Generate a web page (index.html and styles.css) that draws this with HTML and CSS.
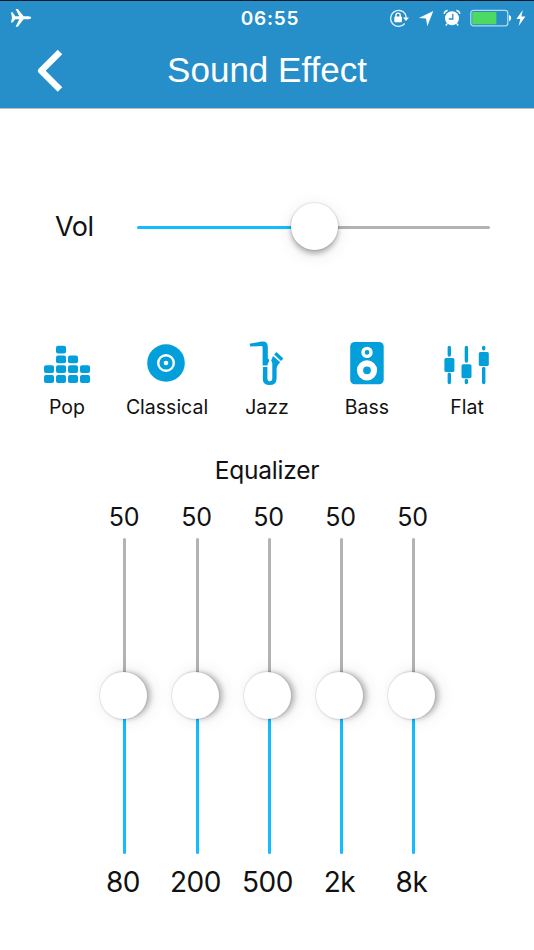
FILE: index.html
```html
<!DOCTYPE html>
<html lang="en">
<head>
  <meta charset="UTF-8" />
  <meta name="viewport" content="width=device-width, initial-scale=1" />
  <title>Sound Effect</title>
  <link rel="stylesheet" href="styles.css">
</head>
<body>

  <header>
    <div class="status">
      <svg class="plane" width="22" height="20" viewBox="0 0 22 20">
        <path d="M1 4.2H2.5L5.3 8.3H9.3L5.6 1H7.8L13.6 8.3H18.6Q21.3 8.7 21.3 9.8Q21.3 10.9 18.6 11.3H13.6L7.8 18.8H5.6L9.3 11.3H5.3L2.5 14.5H1L2 9.8Z" fill="#fff"/>
      </svg>
      <div class="time">06:55</div>
      <div class="indicators">
        <svg width="20" height="18" viewBox="0 0 20 18">
          <path d="M16.3 5A8 8 0 1 0 15.7 14.5" fill="none" stroke="#fff" stroke-opacity=".85" stroke-width="1.4"/>
          <path d="M16.2 5Q17.2 7 17 9" fill="none" stroke="#fff" stroke-width="1.2"/>
          <path d="M14 8.4H20L17 12Z" fill="#fff"/>
          <rect x="5.3" y="7.6" width="7.6" height="5.6" rx=".8" fill="#fff"/>
          <path d="M7 8V6.2A2.1 2.1 0 0 1 11.2 6.2V8" fill="none" stroke="#fff" stroke-width="1.4"/>
        </svg>
        <svg width="16" height="17" viewBox="0 0 16 17">
          <path d="M15.3 1L9.3 16.2L8 8.6L.8 8Z" fill="#fff"/>
        </svg>
        <svg width="18" height="18" viewBox="0 0 18 18">
          <circle cx="9" cy="9.2" r="7" fill="#fff"/>
          <path d="M1 4.7Q1.6 2.3 4.5 1.2M17 4.7Q16.4 2.3 13.5 1.2M4.2 14.6L2.8 16.5M13.8 14.6L15.2 16.5" fill="none" stroke="#fff" stroke-width="1.5"/>
          <path d="M9.8 4.8V10H5.8" fill="none" stroke="#268fca" stroke-width="1.3"/>
        </svg>
        <svg width="42" height="18" viewBox="0 0 42 18">
          <rect x=".8" y="1.4" width="37" height="15.4" rx="2.6" fill="none" stroke="#b4d9ee" stroke-width="1.3"/>
          <rect x="2.2" y="3" width="24.2" height="12.2" rx="1" fill="#4cd964"/>
          <path d="M39 6Q41.2 6.5 41.2 9Q41.2 11.5 39 12.2Z" fill="#fff"/>
        </svg>
        <svg width="10" height="18" viewBox="0 0 10 18">
          <path d="M6.8 1L.4 10H4.3L2.6 17L9.4 7.4H5.4Z" fill="#fff"/>
        </svg>
      </div>
    </div>
    <div class="titlebar">
      <svg class="back" width="28" height="44" viewBox="0 0 28 44">
        <path d="M24 3L5.2 21.8L24 40.6" fill="none" stroke="#fff" stroke-width="6.4" stroke-linejoin="round"/>
      </svg>
      <h1>Sound Effect</h1>
    </div>
  </header>

  <main>
    <div class="volume">
      <label>Vol</label>
      <div class="slider">
        <div class="thumb"></div>
      </div>
    </div>

    <div class="presets">
      <div class="preset">
        <svg width="46" height="44" viewBox="0 0 46 44" fill="#039fdb">
          <rect x="12" y="4.8" width="10" height="7.8" rx="2"/>
          <rect x="12" y="14.5" width="10" height="7.8" rx="2"/>
          <rect x="24" y="14.5" width="10" height="7.8" rx="2"/>
          <rect x="0" y="24.2" width="10" height="7.8" rx="2"/>
          <rect x="12" y="24.2" width="10" height="7.8" rx="2"/>
          <rect x="24" y="24.2" width="10" height="7.8" rx="2"/>
          <rect x="36" y="24.2" width="10" height="7.8" rx="2"/>
          <rect x="0" y="33.9" width="10" height="8" rx="2"/>
          <rect x="12" y="33.9" width="10" height="8" rx="2"/>
          <rect x="24" y="33.9" width="10" height="8" rx="2"/>
          <rect x="36" y="33.9" width="10" height="8" rx="2"/>
        </svg>
        <span>Pop</span>
      </div>
      <div class="preset">
        <svg width="46" height="44" viewBox="0 0 46 44">
          <circle cx="22" cy="22" r="18.8" fill="#039fdb"/>
          <circle cx="22" cy="22" r="7.8" fill="none" stroke="#fff" stroke-width="2.4"/>
          <circle cx="22" cy="22" r="2.3" fill="#fff"/>
        </svg>
        <span>Classical</span>
      </div>
      <div class="preset">
        <svg width="46" height="44" viewBox="0 0 46 44" fill="#039fdb">
          <path d="M5.5 2.8L17.5 .6Q23.8 -.2 23.8 6V17.4Q26.6 19 24.2 21.8L23.4 24.4H18.6V6.4Q18.6 5 17 5.1L6.3 5.6Z"/>
          <path d="M19 26H23.4V37.4Q23.5 40.2 25.8 40.2Q28.3 40.2 28.3 37V22L27.2 19.5L29 15L36.2 21.2Q32.6 25 32.6 28V38Q32.3 44 25.8 44Q18.8 44 18.8 38Z"/>
          <path d="M31.3 12.3L38.2 18.8" fill="none" stroke="#039fdb" stroke-width="3.4"/>
        </svg>
        <span>Jazz</span>
      </div>
      <div class="preset">
        <svg width="46" height="44" viewBox="0 0 46 44">
          <rect x="6.2" y="1" width="33.5" height="42.2" rx="4.5" fill="#039fdb"/>
          <circle cx="23" cy="11.4" r="4" fill="none" stroke="#fff" stroke-width="3.4"/>
          <circle cx="23" cy="29.3" r="7" fill="none" stroke="#fff" stroke-width="6.2"/>
        </svg>
        <span>Bass</span>
      </div>
      <div class="preset">
        <svg width="46" height="44" viewBox="0 0 46 44" fill="#039fdb">
          <path d="M5.3 6.5V14M5.3 33.3V41.5M22.4 6.5V20M22.4 39.5V41.5M39.7 6.5V7.7M39.7 27.5V41.5" fill="none" stroke="#039fdb" stroke-width="3.4" stroke-linecap="round"/>
          <rect x=".4" y="17" width="10" height="14" rx="1.6"/>
          <rect x="17.5" y="23.2" width="10" height="14" rx="1.6"/>
          <rect x="34.8" y="11" width="10" height="14" rx="1.6"/>
        </svg>
        <span>Flat</span>
      </div>
    </div>

    <h2>Equalizer</h2>

    <div class="equalizer">
      <div class="band">
        <div class="level">50</div>
        <div class="track"><div class="thumb side"></div></div>
        <div class="freq">80</div>
      </div>
      <div class="band">
        <div class="level">50</div>
        <div class="track"><div class="thumb side"></div></div>
        <div class="freq">200</div>
      </div>
      <div class="band">
        <div class="level">50</div>
        <div class="track"><div class="thumb side"></div></div>
        <div class="freq">500</div>
      </div>
      <div class="band">
        <div class="level">50</div>
        <div class="track"><div class="thumb side"></div></div>
        <div class="freq">2k</div>
      </div>
      <div class="band">
        <div class="level">50</div>
        <div class="track"><div class="thumb side"></div></div>
        <div class="freq">8k</div>
      </div>
    </div>
  </main>

</body>
</html>
```
FILE: styles.css
```css
:root {
  --header: #268fca;
  --accent: #12bdff;
  --grey: #b3b3b3;
}
* {
  box-sizing: border-box;
}
body {
  margin: 0;
  background: #fff;
  color: #111;
  font-family: Inter, 'Liberation Sans', sans-serif;
  overflow: hidden;
}
header {
  height: 109px;
  background: var(--header);
  border-top: 1px solid #0c1a24;
  border-bottom: 1px solid #bdbdbd;
  color: #fff;
}
.status {
  display: grid;
  grid-template-columns: 1fr auto 1fr;
  align-items: center;
  height: 34px;
  padding: 0 8px 0 10px;
}
.time {
  padding-left: 4px;
  font-size: 19px;
  font-weight: 600;
  letter-spacing: 0.8px;
}
.indicators {
  display: flex;
  justify-content: flex-end;
  align-items: center;
  gap: 9px;
}
.indicators svg:last-child {
  margin-left: -5px;
}
.titlebar {
  display: grid;
  grid-template-columns: 60px 1fr 60px;
  align-items: center;
  height: 72px;
}
.back {
  margin-left: 36px;
}
h1 {
  margin: 0 0 3px;
  font: 35px/40px 'Liberation Sans', sans-serif;
  text-align: center;
}
.volume {
  display: flex;
  align-items: center;
  height: 60px;
  margin-top: 88px;
  padding: 0 44px 0 55px;
}
.volume label {
  width: 82px;
  font-size: 27px;
  letter-spacing: -0.5px;
  line-height: 32px;
}
.slider {
  display: flex;
  justify-content: center;
  align-items: center;
  flex: 1;
  height: 3px;
  border-radius: 2px;
  background: linear-gradient(to right, var(--accent) 50%, var(--grey) 50%);
}
.thumb {
  flex: none;
  width: 47px;
  height: 47px;
  margin: 0 0 1px 2px;
  border-radius: 50%;
  background: #fff;
  box-shadow: 0 4px 5px rgba(0,0,0,0.25), 0 0 1px 1px rgba(0,0,0,0.08), 0 4px 18px rgba(0,0,0,0.1);
}
.thumb.side {
  margin: 0 3px 1px 0;
  box-shadow: 4px 0 5px rgba(0,0,0,0.22), 0 0 1px 1px rgba(0,0,0,0.08), 4px 0 18px rgba(0,0,0,0.1);
}
.presets {
  display: grid;
  grid-template-columns: repeat(5, 100px);
  justify-content: center;
  margin-top: 84px;
}
.preset {
  display: flex;
  flex-direction: column;
  align-items: center;
}
.preset svg {
  overflow: visible;
}
.preset span {
  margin-top: 10px;
  font-size: 19.5px;
  line-height: 24px;
}
h2 {
  margin: 36px 0 0;
  font-size: 24.5px;
  font-weight: 400;
  letter-spacing: -0.2px;
  line-height: 30px;
  text-align: center;
}
.equalizer {
  display: grid;
  grid-template-columns: 73px repeat(4, 72px);
  margin: 17px 0 0 88px;
}
.band {
  display: flex;
  flex-direction: column;
  align-items: center;
}
.level {
  padding-right: 1px;
  font-size: 25px;
  letter-spacing: -0.3px;
  line-height: 30px;
}
.track {
  display: flex;
  justify-content: center;
  align-items: center;
  width: 3px;
  height: 316px;
  margin-top: 6px;
  border-radius: 2px;
  background: linear-gradient(var(--grey) 50%, var(--accent) 50%);
}
.freq {
  margin-top: 11px;
  padding-right: 3px;
  font-size: 28px;
  letter-spacing: -0.4px;
  line-height: 34px;
}
```
